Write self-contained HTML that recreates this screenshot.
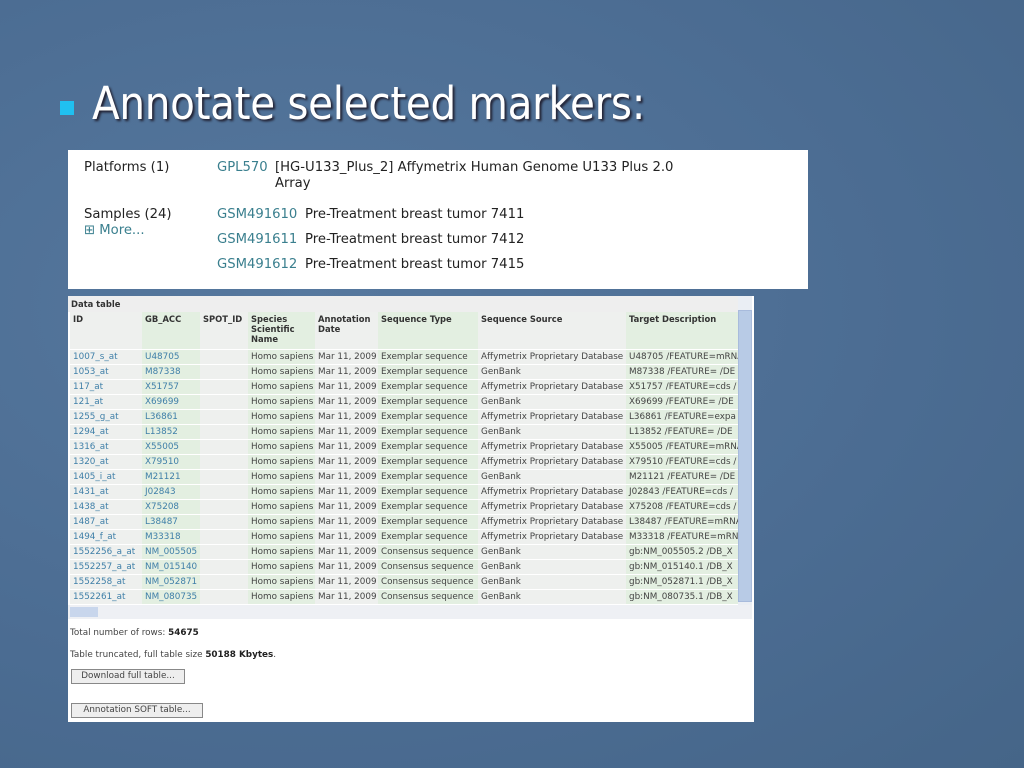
<!DOCTYPE html><html><head><meta charset="utf-8"><style>
body{margin:0;width:1024px;height:768px;overflow:hidden;background:#4c6d93;background-image:radial-gradient(ellipse at 30% 40%,#56789e 0,#4b6c92 60%,#456588 100%);font-family:"Liberation Sans",sans-serif;position:relative}
.abs{position:absolute}
h1{position:absolute;left:92px;top:77px;margin:0;font-weight:normal;font-size:45px;color:#fff;text-shadow:2px 2px 2px #223;font-family:"DejaVu Sans Condensed","Liberation Sans",sans-serif;letter-spacing:-0.3px}
.bul{left:60px;top:101px;width:14px;height:14px;background:#20c0f0}
.p1{left:68px;top:150px;width:740px;height:139px;background:#fff;font-size:13.2px;color:#222;font-family:"DejaVu Sans",sans-serif}
.p1 div{position:absolute;white-space:nowrap}
.lk{color:#3a7f8e}
.p2{left:68px;top:296px;width:686px;height:426px;background:#fff;font-family:"DejaVu Sans",sans-serif;font-size:8.8px;color:#444}
.wrap{position:absolute;left:2px;top:16px;width:668px;height:292px;overflow:hidden}
table{border-collapse:collapse;table-layout:fixed;width:700px}
td{height:14px;padding:0 0 0 3px;border-bottom:1px solid #fff;white-space:nowrap;overflow:hidden;background:#eef0ee}
td.g{background:#e3efe1}
tr.h td{height:35px;vertical-align:top;font-weight:bold;color:#333;padding-top:2px;font-size:8.4px}
td a{color:#3f7fa8}
</style></head><body>
<div class="abs bul"></div>
<h1>Annotate selected markers:</h1>
<div class="abs p1">
<div style="left:16px;top:10px">Platforms (1)</div>
<div style="left:149px;top:10px" class="lk">GPL570</div>
<div style="left:207px;top:10px">[HG-U133_Plus_2] Affymetrix Human Genome U133 Plus 2.0</div>
<div style="left:207px;top:26px">Array</div>
<div style="left:16px;top:57px">Samples (24)</div>
<div style="left:16px;top:73px" class="lk">⊞ More...</div>
<div style="left:149px;top:57px" class="lk">GSM491610</div><div style="left:237px;top:57px">Pre-Treatment breast tumor 7411</div>
<div style="left:149px;top:82px" class="lk">GSM491611</div><div style="left:237px;top:82px">Pre-Treatment breast tumor 7412</div>
<div style="left:149px;top:107px" class="lk">GSM491612</div><div style="left:237px;top:107px">Pre-Treatment breast tumor 7415</div>
</div>
<div class="abs p2">
<div class="abs" style="left:0;top:0;width:670px;height:16px;background:#eee;font-weight:bold;color:#333;padding-left:3px;line-height:16px;font-size:8.4px">Data table</div>
<div class="abs" style="left:670px;top:0;width:14px;height:312px;background:#eaeef4"></div>
<div class="abs" style="left:670px;top:14px;width:12px;height:290px;background:#b8cbe6;border:1px solid #a8bbdc"></div>
<div class="abs" style="left:0;top:309px;width:684px;height:14px;background:#eef0f4"></div>
<div class="abs" style="left:2px;top:311px;width:28px;height:10px;background:#c8d6ec"></div>
<div class="wrap"><table>
<colgroup><col style="width:72px"><col style="width:58px"><col style="width:48px"><col style="width:67px"><col style="width:63px"><col style="width:100px"><col style="width:148px"><col style="width:144px"></colgroup>
<tr class="h"><td>ID</td><td class="g">GB_ACC</td><td>SPOT_ID</td><td class="g">Species<br>Scientific<br>Name</td><td>Annotation<br>Date</td><td class="g">Sequence Type</td><td>Sequence Source</td><td class="g">Target Description</td></tr>
<tr><td><a>1007_s_at</a></td><td class="g"><a>U48705</a></td><td></td><td class="g">Homo sapiens</td><td>Mar 11, 2009</td><td class="g">Exemplar sequence</td><td>Affymetrix Proprietary Database</td><td class="g">U48705 /FEATURE=mRNA</td></tr>
<tr><td><a>1053_at</a></td><td class="g"><a>M87338</a></td><td></td><td class="g">Homo sapiens</td><td>Mar 11, 2009</td><td class="g">Exemplar sequence</td><td>GenBank</td><td class="g">M87338 /FEATURE= /DE</td></tr>
<tr><td><a>117_at</a></td><td class="g"><a>X51757</a></td><td></td><td class="g">Homo sapiens</td><td>Mar 11, 2009</td><td class="g">Exemplar sequence</td><td>Affymetrix Proprietary Database</td><td class="g">X51757 /FEATURE=cds /</td></tr>
<tr><td><a>121_at</a></td><td class="g"><a>X69699</a></td><td></td><td class="g">Homo sapiens</td><td>Mar 11, 2009</td><td class="g">Exemplar sequence</td><td>GenBank</td><td class="g">X69699 /FEATURE= /DE</td></tr>
<tr><td><a>1255_g_at</a></td><td class="g"><a>L36861</a></td><td></td><td class="g">Homo sapiens</td><td>Mar 11, 2009</td><td class="g">Exemplar sequence</td><td>Affymetrix Proprietary Database</td><td class="g">L36861 /FEATURE=expa</td></tr>
<tr><td><a>1294_at</a></td><td class="g"><a>L13852</a></td><td></td><td class="g">Homo sapiens</td><td>Mar 11, 2009</td><td class="g">Exemplar sequence</td><td>GenBank</td><td class="g">L13852 /FEATURE= /DE</td></tr>
<tr><td><a>1316_at</a></td><td class="g"><a>X55005</a></td><td></td><td class="g">Homo sapiens</td><td>Mar 11, 2009</td><td class="g">Exemplar sequence</td><td>Affymetrix Proprietary Database</td><td class="g">X55005 /FEATURE=mRNA</td></tr>
<tr><td><a>1320_at</a></td><td class="g"><a>X79510</a></td><td></td><td class="g">Homo sapiens</td><td>Mar 11, 2009</td><td class="g">Exemplar sequence</td><td>Affymetrix Proprietary Database</td><td class="g">X79510 /FEATURE=cds /</td></tr>
<tr><td><a>1405_i_at</a></td><td class="g"><a>M21121</a></td><td></td><td class="g">Homo sapiens</td><td>Mar 11, 2009</td><td class="g">Exemplar sequence</td><td>GenBank</td><td class="g">M21121 /FEATURE= /DE</td></tr>
<tr><td><a>1431_at</a></td><td class="g"><a>J02843</a></td><td></td><td class="g">Homo sapiens</td><td>Mar 11, 2009</td><td class="g">Exemplar sequence</td><td>Affymetrix Proprietary Database</td><td class="g">J02843 /FEATURE=cds /</td></tr>
<tr><td><a>1438_at</a></td><td class="g"><a>X75208</a></td><td></td><td class="g">Homo sapiens</td><td>Mar 11, 2009</td><td class="g">Exemplar sequence</td><td>Affymetrix Proprietary Database</td><td class="g">X75208 /FEATURE=cds /</td></tr>
<tr><td><a>1487_at</a></td><td class="g"><a>L38487</a></td><td></td><td class="g">Homo sapiens</td><td>Mar 11, 2009</td><td class="g">Exemplar sequence</td><td>Affymetrix Proprietary Database</td><td class="g">L38487 /FEATURE=mRNA</td></tr>
<tr><td><a>1494_f_at</a></td><td class="g"><a>M33318</a></td><td></td><td class="g">Homo sapiens</td><td>Mar 11, 2009</td><td class="g">Exemplar sequence</td><td>Affymetrix Proprietary Database</td><td class="g">M33318 /FEATURE=mRN</td></tr>
<tr><td><a>1552256_a_at</a></td><td class="g"><a>NM_005505</a></td><td></td><td class="g">Homo sapiens</td><td>Mar 11, 2009</td><td class="g">Consensus sequence</td><td>GenBank</td><td class="g">gb:NM_005505.2 /DB_X</td></tr>
<tr><td><a>1552257_a_at</a></td><td class="g"><a>NM_015140</a></td><td></td><td class="g">Homo sapiens</td><td>Mar 11, 2009</td><td class="g">Consensus sequence</td><td>GenBank</td><td class="g">gb:NM_015140.1 /DB_X</td></tr>
<tr><td><a>1552258_at</a></td><td class="g"><a>NM_052871</a></td><td></td><td class="g">Homo sapiens</td><td>Mar 11, 2009</td><td class="g">Consensus sequence</td><td>GenBank</td><td class="g">gb:NM_052871.1 /DB_X</td></tr>
<tr><td><a>1552261_at</a></td><td class="g"><a>NM_080735</a></td><td></td><td class="g">Homo sapiens</td><td>Mar 11, 2009</td><td class="g">Consensus sequence</td><td>GenBank</td><td class="g">gb:NM_080735.1 /DB_X</td></tr>
</table></div>
<div class="abs" style="left:2px;top:332px">Total number of rows: <b style="color:#222">54675</b></div>
<div class="abs" style="left:2px;top:354px">Table truncated, full table size <b style="color:#222">50188 Kbytes</b>.</div>
<div class="abs" style="left:3px;top:373px;width:112px;height:13px;border:1px solid #888;background:#eee;text-align:center;line-height:13px">Download full table...</div>
<div class="abs" style="left:3px;top:407px;width:130px;height:13px;border:1px solid #888;background:#eee;text-align:center;line-height:13px">Annotation SOFT table...</div>
</div>
</body></html>
